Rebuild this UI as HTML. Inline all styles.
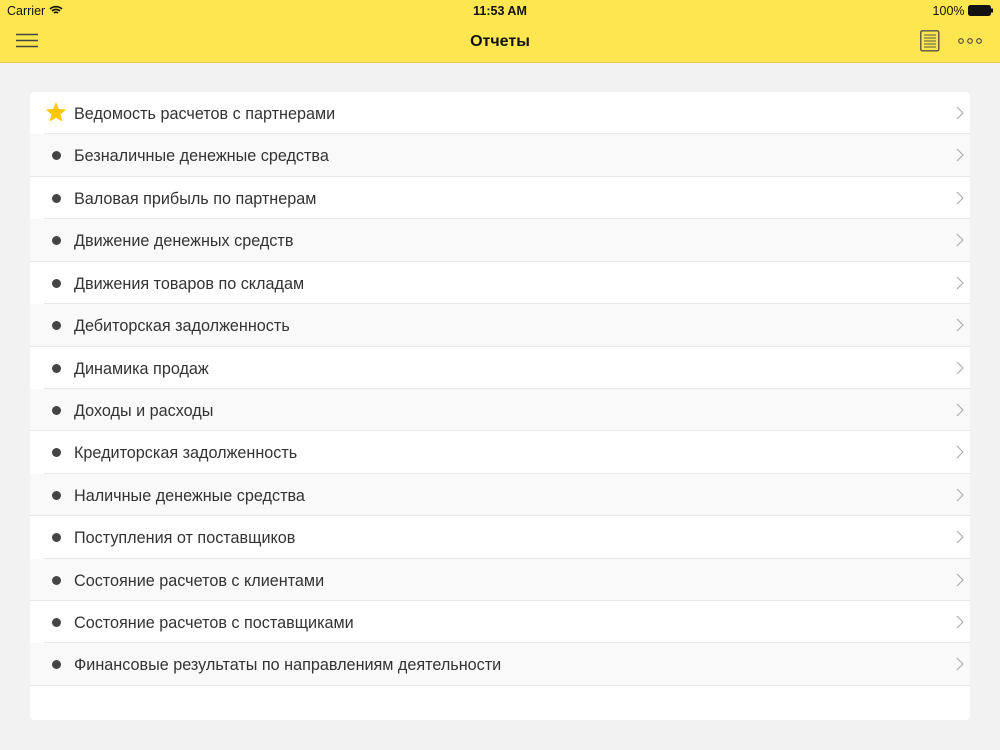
<!DOCTYPE html>
<html><head><meta charset="utf-8"><style>
*{margin:0;padding:0;box-sizing:border-box}
body{width:1000px;height:750px;background:#f2f2f2;font-family:"Liberation Sans",sans-serif;position:relative;overflow:hidden}
.hdr{position:absolute;left:0;top:0;width:1000px;height:63px;background:#fde64f;border-bottom:1px solid #e5cf4a}
.sb{position:absolute;top:4px;font-size:12.5px;color:#111}
.title{position:absolute;top:33px;left:0;width:1000px;text-align:center;font-size:16px;font-weight:bold;color:#111}
.card{position:absolute;left:30px;top:92px;width:940px;height:628px;background:#fff;border-radius:4px}
.row{position:relative;height:42.43px;border-bottom:1px solid #e8e8e8;margin-left:14px;font-size:16.2px;color:#333}
.row.g{background:#f9f9f9;margin-left:0;padding-left:14px}
.row span{position:absolute;left:30px;top:13px}
.row.g span{left:44px}
.dot{position:absolute;left:8px;top:17px;width:9px;height:9px;border-radius:50%;background:#444}
.row.g .dot{left:22px}
.chev{position:absolute;right:6px;top:14px}
</style></head><body>
<div class="hdr">
<div class="sb" style="left:7px">Carrier
<svg width="14" height="10" viewBox="0 0 14 10" style="vertical-align:0"><path d="M1 4a9 9 0 0 1 12 0M3 6a6 6 0 0 1 8 0M5 8a3 3 0 0 1 4 0" stroke="#111" stroke-width="1.6" fill="none"/></svg></div>
<div class="sb" style="left:0;width:1000px;text-align:center;font-weight:bold">11:53 AM</div>
<div class="sb" style="right:6px">100% <svg width="26" height="11" viewBox="0 0 26 11" style="vertical-align:-1px"><rect x="0.5" y="0.5" width="22" height="10" rx="2" fill="#111" stroke="#111"/><rect x="23" y="3.5" width="2" height="4" fill="#111"/></svg></div>
<svg style="position:absolute;left:16px;top:33px" width="22" height="16"><path d="M0 1.5h22M0 7.5h22M0 13.5h22" stroke="#444" stroke-width="1.6"/></svg>
<div class="title">Отчеты</div>
<svg style="position:absolute;left:920px;top:30px" width="20" height="22"><rect x="0.8" y="0.8" width="18" height="20" rx="1.5" fill="none" stroke="#554" stroke-width="1.4"/><path d="M4 5h12M4 8h12M4 11h12M4 14h12M4 17h12" stroke="#554" stroke-width="1"/></svg>
<svg style="position:absolute;left:958px;top:37px" width="24" height="8"><circle cx="3" cy="4" r="2.3" fill="none" stroke="#444" stroke-width="1.1"/><circle cx="12" cy="4" r="2.3" fill="none" stroke="#444" stroke-width="1.1"/><circle cx="21" cy="4" r="2.3" fill="none" stroke="#444" stroke-width="1.1"/></svg>
</div>
<div class="card">
<div class="row"><svg style="position:absolute;left:1px;top:10px" width="22" height="21" viewBox="0 0 24 23"><path d="M12 0l3.1 7.6 8.2.6-6.3 5.3 2 8L12 17.3 5 21.5l2-8L.7 8.2l8.2-.6z" fill="#fdc700"/></svg><span>Ведомость расчетов с партнерами</span><svg class="chev" width="8" height="14"><path d="M1 1l6 6-6 6" stroke="#aaa" stroke-width="1.1" fill="none"/></svg></div>
<div class="row g"><i class="dot"></i><span>Безналичные денежные средства</span><svg class="chev" width="8" height="14"><path d="M1 1l6 6-6 6" stroke="#aaa" stroke-width="1.1" fill="none"/></svg></div>
<div class="row"><i class="dot"></i><span>Валовая прибыль по партнерам</span><svg class="chev" width="8" height="14"><path d="M1 1l6 6-6 6" stroke="#aaa" stroke-width="1.1" fill="none"/></svg></div>
<div class="row g"><i class="dot"></i><span>Движение денежных средств</span><svg class="chev" width="8" height="14"><path d="M1 1l6 6-6 6" stroke="#aaa" stroke-width="1.1" fill="none"/></svg></div>
<div class="row"><i class="dot"></i><span>Движения товаров по складам</span><svg class="chev" width="8" height="14"><path d="M1 1l6 6-6 6" stroke="#aaa" stroke-width="1.1" fill="none"/></svg></div>
<div class="row g"><i class="dot"></i><span>Дебиторская задолженность</span><svg class="chev" width="8" height="14"><path d="M1 1l6 6-6 6" stroke="#aaa" stroke-width="1.1" fill="none"/></svg></div>
<div class="row"><i class="dot"></i><span>Динамика продаж</span><svg class="chev" width="8" height="14"><path d="M1 1l6 6-6 6" stroke="#aaa" stroke-width="1.1" fill="none"/></svg></div>
<div class="row g"><i class="dot"></i><span>Доходы и расходы</span><svg class="chev" width="8" height="14"><path d="M1 1l6 6-6 6" stroke="#aaa" stroke-width="1.1" fill="none"/></svg></div>
<div class="row"><i class="dot"></i><span>Кредиторская задолженность</span><svg class="chev" width="8" height="14"><path d="M1 1l6 6-6 6" stroke="#aaa" stroke-width="1.1" fill="none"/></svg></div>
<div class="row g"><i class="dot"></i><span>Наличные денежные средства</span><svg class="chev" width="8" height="14"><path d="M1 1l6 6-6 6" stroke="#aaa" stroke-width="1.1" fill="none"/></svg></div>
<div class="row"><i class="dot"></i><span>Поступления от поставщиков</span><svg class="chev" width="8" height="14"><path d="M1 1l6 6-6 6" stroke="#aaa" stroke-width="1.1" fill="none"/></svg></div>
<div class="row g"><i class="dot"></i><span>Состояние расчетов с клиентами</span><svg class="chev" width="8" height="14"><path d="M1 1l6 6-6 6" stroke="#aaa" stroke-width="1.1" fill="none"/></svg></div>
<div class="row"><i class="dot"></i><span>Состояние расчетов с поставщиками</span><svg class="chev" width="8" height="14"><path d="M1 1l6 6-6 6" stroke="#aaa" stroke-width="1.1" fill="none"/></svg></div>
<div class="row g"><i class="dot"></i><span>Финансовые результаты по направлениям деятельности</span><svg class="chev" width="8" height="14"><path d="M1 1l6 6-6 6" stroke="#aaa" stroke-width="1.1" fill="none"/></svg></div>
</div>
</body></html>
